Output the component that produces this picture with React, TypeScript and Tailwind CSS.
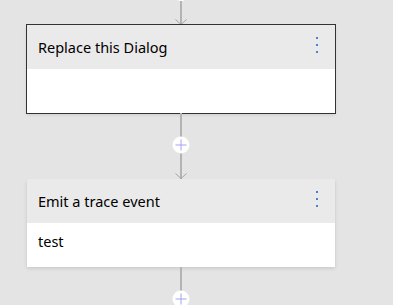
import React from "react";

const LINE = "#b3b3b3";
const PLUS = "#a3a3f2";

function Connector({ height, circleY, chevron }: { height: number; circleY?: number; chevron?: boolean }) {
  return (
    <svg width={20} height={height} viewBox={`0 0 20 ${height}`} className="block shrink-0 overflow-visible">
      <rect x={9} y={0} width={2} height={height} fill={LINE} />
      {circleY !== undefined && (
        <g>
          <circle cx={10} cy={circleY} r={8.5} fill="#ffffff" />
          <line x1={4.5} y1={circleY} x2={15.5} y2={circleY} stroke={PLUS} strokeWidth={1} />
          <line x1={10} y1={circleY - 5.5} x2={10} y2={circleY + 5.5} stroke={PLUS} strokeWidth={1} />
        </g>
      )}
      {chevron && (
        <polyline
          points={`4.5,${height - 5.5} 10,${height - 0.5} 15.5,${height - 5.5}`}
          fill="none"
          stroke="#a6a6a6"
          strokeWidth={1}
        />
      )}
    </svg>
  );
}

function Dots() {
  return (
    <div className="flex flex-col gap-[5px] pt-3">
      <span className="block w-[2px] h-[2px] bg-[#4a7fd8]" />
      <span className="block w-[2px] h-[2px] bg-[#4a7fd8]" />
      <span className="block w-[2px] h-[2px] bg-[#4a7fd8]" />
    </div>
  );
}

function Card({ title, body, selected }: { title: string; body?: string; selected?: boolean }) {
  return (
    <div
      className={
        selected
          ? "w-[308px] h-[88px] flex flex-col bg-white ring-1 ring-[#333333] shadow-[0_1.6px_3.6px_rgba(0,0,0,0.13),0_0.3px_0.9px_rgba(0,0,0,0.11)]"
          : "w-[308px] h-[88px] flex flex-col bg-white shadow-[0_1.6px_3.6px_rgba(0,0,0,0.13),0_0.3px_0.9px_rgba(0,0,0,0.11)]"
      }
    >
      <div className="h-[44px] bg-[#eaeaea] flex flex-row justify-between pl-[11px] pr-[17px]">
        <span className="pt-[12px] text-[14.5px] leading-[20px] text-black">{title}</span>
        <Dots />
      </div>
      <div className="h-[44px] bg-white pl-[11px] pt-[6px]">
        {body && <span className="text-[14.5px] leading-[20px] text-black">{body}</span>}
      </div>
    </div>
  );
}

export default function App() {
  return (
    <div
      className="w-[393px] h-[305px] overflow-hidden bg-[#e4e4e4]"
      style={{ fontFamily: '"Noto Sans", "Open Sans", sans-serif' }}
    >
      <div className="w-[308px] ml-[27px] flex flex-col items-center">
        <Connector height={25} circleY={-7.5} chevron />
        <Card title="Replace this Dialog" selected />
        <Connector height={66} circleY={32} chevron />
        <Card title="Emit a trace event" body="test" />
        <Connector height={40} circleY={32} />
      </div>
    </div>
  );
}
